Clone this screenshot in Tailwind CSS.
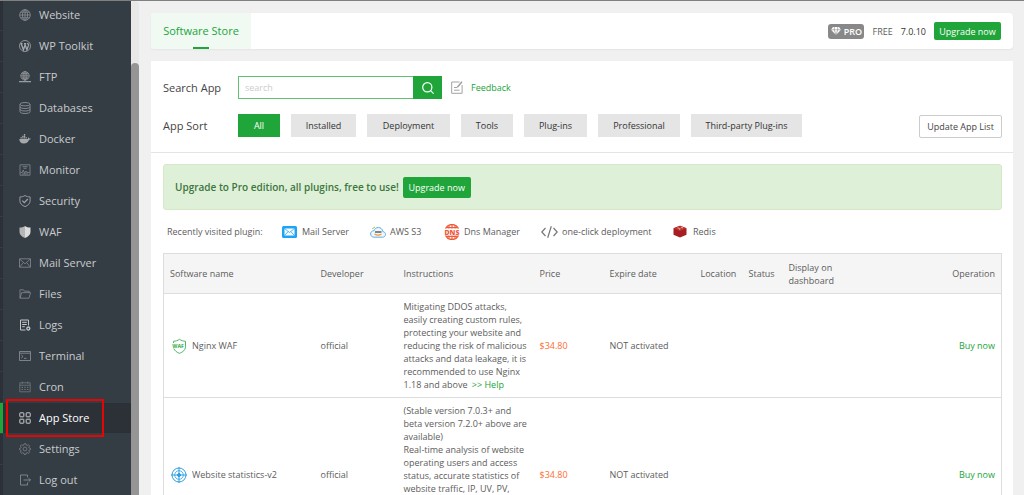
<!DOCTYPE html>
<html lang="en">
<head>
<meta charset="utf-8">
<title>Software Store</title>
<script src="https://cdn.jsdelivr.net/npm/@tailwindcss/browser@4"></script>
</head>
<body class="flex h-screen overflow-hidden border-t border-[#808080] bg-[#f0f0f0] font-['Open_Sans','Noto_Sans',sans-serif] text-[9px] leading-[13px] text-[#5c5c5c]">

<!-- Sidebar -->
<nav class="relative -mt-px w-[131px] shrink-0 border-t border-[#54585c] bg-[#353d44] text-[11px] leading-3 text-[#c8cbce]" aria-label="Main menu">
  <ul class="-mt-px grid gap-px">
    <li class="h-[30px] border-l-[3px] border-[#2c3138]"><a href="#" class="flex h-full items-center gap-2 pl-4"><svg class="size-3 text-[#8b9095]" viewBox="0 0 12 12" fill="none" stroke="currentColor" stroke-width=".8"><circle cx="6" cy="6" r="5.3"/><ellipse cx="6" cy="6" rx="2.5" ry="5.3"/><path d="M6 .7v10.6M.7 6h10.6M1.5 3.2h9M1.5 8.8h9"/></svg>Website</a></li>
    <li class="h-[30px] border-l-[3px] border-[#2c3138]"><a href="#" class="flex h-full items-center gap-2 pl-4"><svg class="size-3 text-[#a5a9ac]" viewBox="0 0 12 12" fill="none" stroke="currentColor"><circle cx="6" cy="6" r="5.5" stroke-width=".8"/><path d="M1.5 3.6h2M5 3.6h2.2M2.2 3.8l2.2 6 1.6-4.5M5.7 3.8l2.2 6 1.6-4.4c.3-1-.9-1.3-.9-2.4" stroke-width="1.3"/></svg>WP Toolkit</a></li>
    <li class="h-[30px] border-l-[3px] border-[#2c3138]"><a href="#" class="flex h-full items-center gap-2 pl-4"><svg class="size-3 text-[#979ca0]" viewBox="0 0 12 12" fill="none" stroke="currentColor" stroke-width=".8"><circle cx="6" cy="4.8" r="4.2"/><ellipse cx="6" cy="4.8" rx="2" ry="4.2"/><path d="M1.8 4.8h8.4M2.5 2.7h7M2.5 7h7M6 .6v10"/><path d="M0 10.7h12M4.5 10.7h3" stroke-width="1.2"/></svg>FTP</a></li>
    <li class="h-[30px] border-l-[3px] border-[#2c3138]"><a href="#" class="flex h-full items-center gap-2 pl-4"><svg class="size-3 text-[#979ca0]" viewBox="0 0 12 12" fill="none" stroke="currentColor" stroke-width=".8"><ellipse cx="6" cy="2.2" rx="5" ry="1.7"/><path d="M1 2.2v7.6c0 1 2.2 1.7 5 1.7s5-.7 5-1.7V2.2M1 4.8c0 1 2.2 1.7 5 1.7s5-.7 5-1.7M1 7.3C1 8.3 3.2 9 6 9s5-.7 5-1.7"/></svg>Databases</a></li>
    <li class="h-[30px] border-l-[3px] border-[#2c3138]"><a href="#" class="flex h-full items-center gap-2 pl-4"><svg class="size-3 text-[#a5a9ac]" viewBox="0 0 12 12" fill="currentColor"><path d="M.3 6h8.5c.5-.4.5-1.3.1-2 .8.3 1.2.9 1.3 1.5.6-.1 1.2 0 1.6.3-.3.7-.9 1-1.7 1C9.3 9.2 7.6 10.5 4.8 10.5 1.8 10.5.3 8.7.3 6zM1.5 4.3h1.3v1.3H1.5zM3.2 4.3h1.3v1.3H3.2zM4.9 4.3h1.3v1.3H4.9zM6.6 4.3h1.3v1.3H6.6zM3.2 2.7h1.3V4H3.2zM4.9 2.7h1.3V4H4.9zM4.9 1.1h1.3v1.3H4.9z"/></svg>Docker</a></li>
    <li class="h-[30px] border-l-[3px] border-[#2c3138]"><a href="#" class="flex h-full items-center gap-2 pl-4"><svg class="size-3 text-[#858a8f]" viewBox="0 0 12 12" fill="none" stroke="currentColor" stroke-width=".8"><path d="M1 .8h10v10.4H1zM3.5 2.7h5M4.5 4.3h3M1.5 8.5h1.8l1-2.5 1.3 3.5L7 7l.8 1.5h2.7M3 10h6"/></svg>Monitor</a></li>
    <li class="h-[30px] border-l-[3px] border-[#2c3138]"><a href="#" class="flex h-full items-center gap-2 pl-4"><svg class="size-3 text-[#a0a4a8]" viewBox="0 0 12 12" fill="none" stroke="currentColor"><path d="M6 .5c1.5 1 3.2 1.4 5.1 1.4v4C11.1 8.5 9 10.6 6 11.6 3 10.6.9 8.5.9 5.9v-4C2.8 1.9 4.5 1.5 6 .5z" stroke-width=".9"/><path d="M3.3 5.7l2 2 3.5-3.7" stroke-width="1.2"/></svg>Security</a></li>
    <li class="h-[30px] border-l-[3px] border-[#2c3138]"><a href="#" class="flex h-full items-center gap-2 pl-4"><svg class="size-3" viewBox="0 0 12 12"><path d="M6 0C4.5 1.1 2.6 1.6.5 1.6V6c0 2.8 2.4 4.8 5.5 6z" fill="#b5b5b5"/><path d="M6 0c1.5 1.1 3.4 1.6 5.5 1.6V6c0 2.8-2.4 4.8-5.5 6z" fill="#dcdcdc"/></svg>WAF</a></li>
    <li class="h-[30px] border-l-[3px] border-[#2c3138]"><a href="#" class="flex h-full items-center gap-2 pl-4"><svg class="size-3 text-[#858a8f]" viewBox="0 0 12 12" fill="none" stroke="currentColor" stroke-width=".8"><path d="M.5 1.8h11v8.4H.5zM.8 2.2L6 6.8l5.2-4.6M.8 9.9l3.5-4.3M11.2 9.9L7.7 5.6"/></svg>Mail Server</a></li>
    <li class="h-[30px] border-l-[3px] border-[#2c3138]"><a href="#" class="flex h-full items-center gap-2 pl-4"><svg class="size-3 text-[#858a8f]" viewBox="0 0 12 12" fill="none" stroke="currentColor" stroke-width=".8"><path d="M1 10.2V1.8h3.5l1 1.4h4.7v1.4M1 10.2l1.7-5.6h8.8l-1.5 5.6z"/></svg>Files</a></li>
    <li class="h-[30px] border-l-[3px] border-[#2c3138]"><a href="#" class="flex h-full items-center gap-2 pl-4"><svg class="size-3 text-[#c3c6c9]" viewBox="0 0 12 12" fill="none" stroke="currentColor" stroke-width="1"><path d="M9.5 6.5V1H1.5v10h5M3.2 3.3h4.6M3.2 5.5h4.6M3.2 7.7h2.6"/><circle cx="9.3" cy="9.5" r="1.5" stroke-width="1.3"/></svg>Logs</a></li>
    <li class="h-[30px] border-l-[3px] border-[#2c3138]"><a href="#" class="flex h-full items-center gap-2 pl-4"><svg class="size-3 text-[#8f9498]" viewBox="0 0 12 12" fill="none" stroke="currentColor" stroke-width=".8"><path d="M.5 1.5h11v9H.5zM.5 3.2h11M2.3 5l1.7 1.5L2.3 8M5 8.4h2.5"/></svg>Terminal</a></li>
    <li class="h-[30px] border-l-[3px] border-[#2c3138]"><a href="#" class="flex h-full items-center gap-2 pl-4"><svg class="size-3 text-[#73797e]" viewBox="0 0 12 12" fill="none" stroke="currentColor" stroke-width=".8"><path d="M.8 1.8h10.4v9H.8zM.8 4.2h10.4M3.3.6v2.2M8.7.6v2.2"/><path d="M2.6 6.3h7M2.6 8.5h7" stroke-dasharray="1.4 1.3" stroke-width="1"/></svg>Cron</a></li>
    <li class="h-[30px] border-l-[3px] border-[#20a53a] bg-[#2c3138] text-white"><a href="#" aria-current="page" class="flex h-full items-center gap-2 pl-4"><svg class="size-3 text-[#c9cbcd]" viewBox="0 0 12 12" fill="none" stroke="currentColor" stroke-width="1"><rect x=".8" y=".8" width="4" height="4" rx=".4"/><rect x="7.2" y=".8" width="4" height="4" rx=".4"/><rect x=".8" y="7.2" width="4" height="4" rx=".4"/><rect x="7.2" y="7.2" width="4" height="4" rx=".4"/></svg>App Store</a></li>
    <li class="h-[30px] border-l-[3px] border-[#2c3138]"><a href="#" class="flex h-full items-center gap-2 pl-4"><svg class="size-3 text-[#7d8287]" viewBox="0 0 12 12" fill="none" stroke="currentColor" stroke-width=".8"><circle cx="6" cy="6" r="1.9"/><path d="M5.1.7h1.8l.3 1.4 1 .4 1.2-.8 1.2 1.2-.8 1.2.4 1 1.3.3v1.3l-1.3.3-.4 1 .8 1.2-1.2 1.2-1.2-.8-1 .4-.3 1.4H5.1l-.3-1.4-1-.4-1.2.8-1.2-1.2.8-1.2-.4-1L.5 6.7V5.4l1.3-.3.4-1-.8-1.2 1.2-1.2 1.2.8 1-.4z"/></svg>Settings</a></li>
    <li class="h-[30px] border-l-[3px] border-[#2c3138]"><a href="#" class="flex h-full items-center gap-2 pl-4"><svg class="size-3 text-[#858a8f]" viewBox="0 0 12 12" fill="none" stroke="currentColor" stroke-width=".9"><path d="M8.5 3.5V1H1.5v10h7V8.5M4.5 6h7M9.7 4.2L11.5 6 9.7 7.8"/></svg>Log out</a></li>
  </ul>
  <!-- Highlight around the current entry -->
  <div class="pointer-events-none absolute left-[6px] top-[398px] h-[38px] w-[98px] border-2 border-[#e60505]"></div>
</nav>

<!-- Sidebar scrollbar -->
<div class="flex w-2 shrink-0 flex-col rounded-t bg-[#e8e8e8] pt-[62px]"><div class="grow rounded-t bg-[#959595]"></div></div>

<main class="flex min-w-0 grow flex-col gap-3 pl-3 pr-[11px] pt-3">
  <header class="flex h-9 shrink-0 items-center justify-between rounded bg-white pr-3 shadow-xs">
    <a href="#" class="relative flex h-full w-[100px] items-center justify-center rounded-l bg-[#f0f9f2] text-[11px] leading-3 text-[#20a53a]">Software Store<span class="absolute bottom-0 left-[42px] h-[2px] w-4 bg-[#20a53a]"></span></a>
    <div class="flex items-center">
      <span class="flex h-[15px] w-9 items-center justify-center gap-[3px] rounded-[3px] bg-[#888] font-semibold text-white"><svg class="h-2 w-[10px]" viewBox="0 0 10 8"><path d="M2 0h6l2 2.8L5 8 0 2.8z" fill="#fff"/><path d="M0 2.8h10M3.3 0v2.8L5 8l1.7-5.2V0" fill="none" stroke="#888" stroke-width=".6"/></svg>PRO</span>
      <span class="ml-2">FREE</span>
      <span class="ml-2 text-[#333]">7.0.10</span>
      <button type="button" class="ml-2 h-[18px] w-[67px] rounded-[2px] bg-[#20a53a] text-white">Upgrade now</button>
    </div>
  </header>

  <section class="grow bg-white pl-3 pr-[11px] pt-[15px]">
    <form class="flex h-[23px] items-center" onsubmit="return false">
      <label for="q" class="w-[75px] text-[11px] text-[#444]">Search App</label>
      <input id="q" type="text" placeholder="search" class="h-full w-[175px] border border-r-0 border-[#20a53a]/70 px-[6px] outline-none placeholder:text-[#ccc]">
      <button type="submit" aria-label="Search" class="flex h-full w-[29px] items-center justify-center bg-[#20a53a]"><svg class="size-3" viewBox="0 0 12 12" fill="none" stroke="#fff" stroke-width="1.2"><circle cx="5.3" cy="5.3" r="4.6"/><path d="M8.6 8.6l3 3"/></svg></button>
      <a href="#" class="ml-[9px] flex items-center gap-2 text-[#20a53a]"><svg class="h-[13px] w-3" viewBox="0 0 12 13" fill="none" stroke="#999" stroke-width=".9"><path d="M8.5 1H.7v11.3h10.4V4M3 6.5h3M3 9.2h5.5"/><path d="M11 .8L6.3 6.2" stroke-width="1.3"/></svg>Feedback</a>
    </form>

    <div class="mt-[15px] flex items-start">
      <span class="w-[75px] text-[11px] leading-[23px] text-[#444]">App Sort</span>
      <div class="flex grow gap-[11px] text-[#333]">
        <button type="button" class="h-[23px] w-[42px] bg-[#20a53a] text-white">All</button>
        <button type="button" class="h-[23px] w-[65px] bg-[#e5e5e5]">Installed</button>
        <button type="button" class="h-[23px] w-[83px] bg-[#e5e5e5]">Deployment</button>
        <button type="button" class="h-[23px] w-[52px] bg-[#e5e5e5]">Tools</button>
        <button type="button" class="h-[23px] w-[63px] bg-[#e5e5e5]">Plug-ins</button>
        <button type="button" class="h-[23px] w-[82px] bg-[#e5e5e5]">Professional</button>
        <button type="button" class="h-[23px] w-[111px] bg-[#e5e5e5]">Third-party Plug-ins</button>
      </div>
      <button type="button" class="mt-px h-[23px] w-[83px] rounded-[2px] border border-[#ccc] text-[#444]">Update App List</button>
    </div>

    <hr class="-ml-3 -mr-[11px] mt-[14px] border-[#e4e4e4]">

    <div class="mt-[11px] flex h-[46px] items-center gap-1 rounded-[3px] border border-[#d6e9c6] bg-[#dff0d8] px-[11px]">
      <strong class="text-[10px] font-semibold text-[#3c763d]">Upgrade to Pro edition, all plugins, free to use!</strong>
      <button type="button" class="h-[21px] w-[68px] rounded-[2px] bg-[#20a53a] text-white">Upgrade now</button>
    </div>

    <div class="flex h-[43px] items-center pl-1">
      <span class="w-[115px]">Recently visited plugin:</span>
      <a href="#" class="flex w-[88px] items-center gap-[5px]"><svg class="h-3 w-[15px]" viewBox="0 0 15 12"><rect width="15" height="12" rx="1.5" fill="#1ba5f5"/><rect x="2.5" y="2.5" width="10" height="7" fill="#fff"/><path d="M2.5 2.5l5 4 5-4M2.5 9.5l3.7-4M12.5 9.5l-3.7-4" fill="none" stroke="#1ba5f5" stroke-width=".8"/></svg>Mail Server</a>
      <a href="#" class="flex w-[74px] items-center gap-1"><svg class="h-3 w-4" viewBox="0 0 16 12"><path d="M4 11.2h8.5c1.7 0 3-1.1 3-2.8 0-1.6-1.2-2.7-2.6-2.7C12.6 3.3 10.8 1.5 8.4 1.5c-2.2 0-3.8 1.3-4.3 3.2C2 4.7.6 6 .6 8c0 1.9 1.5 3.2 3.4 3.2z" fill="#eef7fd" stroke="#62aee0" stroke-width="1"/><path d="M5 6h6.5" stroke="#666" stroke-width="1.6"/><path d="M4.5 8c2 1.3 5 1.3 7 0" fill="none" stroke="#f19a38" stroke-width="1.1"/><path d="M2.2 2.8L5 1" stroke="#8bc34a" stroke-width="1"/></svg>AWS S3</a>
      <a href="#" class="flex w-[97px] items-center gap-1"><svg class="size-4" viewBox="0 0 16 16" fill="none" stroke="#ef5b3c"><path d="M1.5 4.5a7.3 7.3 0 0 1 13 0M1.5 11.5a7.3 7.3 0 0 0 13 0" stroke-width="1.4"/><path d="M8 .5v4M8 11.5v4M2.5 3.6h11M2.500 12.400h11M5.200 1.500l-.6 3M10.800 1.500l.6 3M5.200 14.500l-.6-3M10.800 14.500l.6-3" stroke-width="1.200"/><text x="8" y="10.600" text-anchor="middle" font-size="7" font-weight="800" fill="#ef5b3c" stroke="none">DNS</text></svg>Dns Manager</a>
      <a href="#" class="flex w-[132px] items-center gap-1"><svg class="h-3 w-[17px]" viewBox="0 0 17 12" fill="none" stroke="#777" stroke-width="1.2"><path d="M4.5 2L.8 6l3.7 4M12.5 2l3.7 4-3.7 4M10.3.3L6.7 11.7"/></svg>one-click deployment</a>
      <a href="#" class="flex items-center gap-[6px]"><svg class="h-[13px] w-[14px]" viewBox="0 0 14 13"><path d="M.5 3.3L7 .8l6.5 2.5v6.5L7 12.5.5 9.8z" fill="#a41e22"/><path d="M7 .8l6.5 2.5L7 6 .5 3.3z" fill="#bd3430"/><path d="M4.5 2.8l2 .7M8 2.2l2 .8M6 4.3l1.5-.4" stroke="#f3d5d3" stroke-width=".8"/></svg>Redis</a>
    </div>

    <table class="w-full table-fixed border-collapse border border-[#ddd] text-left">
      <colgroup><col class="w-[151px]"><col class="w-[83px]"><col class="w-[136px]"><col class="w-[70px]"><col class="w-[91px]"><col class="w-[48px]"><col class="w-[40px]"><col class="w-[66px]"><col></colgroup>
      <thead>
        <tr class="h-10 border-b border-[#ddd] bg-[#f5f5f5] *:px-[6px] *:font-normal">
          <th scope="col">Software name</th><th scope="col">Developer</th><th scope="col">Instructions</th><th scope="col">Price</th><th scope="col">Expire date</th><th scope="col">Location</th><th scope="col">Status</th><th scope="col">Display on dashboard</th><th scope="col" class="text-right">Operation</th>
        </tr>
      </thead>
      <tbody>
        <tr class="border-b border-[#ddd] *:px-[6px] *:py-[6px]">
          <td><a href="#" class="flex items-center gap-1"><svg class="size-[18px]" viewBox="0 0 18 18" fill="none" stroke="#4db862" stroke-width="1"><path d="M3.5 6V4.300C5.500 4.200 8 3.500 9.500 2.300c1.500 1.200 3.800 1.900 6 2v5.500c0 3-2.500 5.200-6 6.500-2.800-1-4.900-2.600-5.700-4.800"/><text x="8" y="10.800" text-anchor="middle" font-size="5" font-weight="800" fill="#4db862" stroke="none">WAF</text></svg>Nginx WAF</a></td>
          <td>official</td>
          <td class="whitespace-nowrap">Mitigating DDOS attacks,<br>easily creating custom rules,<br>protecting your website and<br>reducing the risk of malicious<br>attacks and data leakage, it is<br>recommended to use Nginx<br>1.18 and above <a href="#" class="ml-[2px] text-[#20a53a]">&gt;&gt; Help</a></td>
          <td class="text-[#ff6d2e]">$34.80</td>
          <td>NOT activated</td><td></td><td></td><td></td>
          <td class="text-right"><a href="#" class="text-[#20a53a]">Buy now</a></td>
        </tr>
        <tr class="h-[154px] *:px-[6px] *:py-[6px]">
          <td><a href="#" class="flex items-center gap-1"><svg class="size-[18px]" viewBox="0 0 18 18" fill="none" stroke="#2b9fe0"><circle cx="9" cy="9" r="7" stroke-width="1"/><circle cx="9" cy="9" r="4.300" stroke-width=".8"/><path d="M9 1v16M1 9h16" stroke-width="1"/><circle cx="9" cy="9" r="1.500" fill="#2b9fe0"/></svg>Website statistics-v2</a></td>
          <td>official</td>
          <td class="whitespace-nowrap align-top">(Stable version 7.0.3+ and<br>beta version 7.2.0+ above are<br>available)<br>Real-time analysis of website<br>operating users and access<br>status, accurate statistics of<br>website traffic, IP, UV, PV,</td>
          <td class="text-[#ff6d2e]">$34.80</td>
          <td>NOT activated</td><td></td><td></td><td></td>
          <td class="text-right"><a href="#" class="text-[#20a53a]">Buy now</a></td>
        </tr>
      </tbody>
    </table>
  </section>
</main>
</body>
</html>
